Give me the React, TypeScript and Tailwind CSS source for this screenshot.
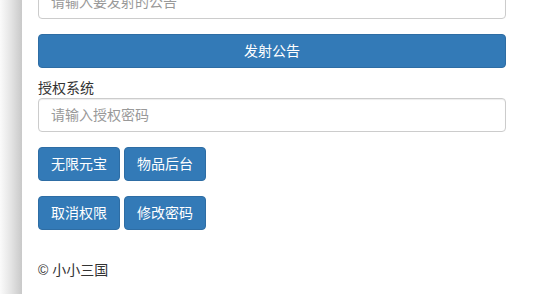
import React from 'react';

const btn =
  'inline-flex h-[34px] items-center justify-center rounded-[4px] border border-[#2e6da4] bg-[#337ab7] px-3 text-[14px] text-white';

const input =
  'block h-[34px] w-full rounded-[4px] border border-[#ccc] bg-white px-3 text-[14px] text-[#555] shadow-[inset_0_1px_1px_rgba(0,0,0,0.075)] outline-none placeholder:text-[#999]';

export default function App() {
  return (
    <div
      className="flex h-[294px] w-[539px] overflow-hidden bg-white text-[14px] leading-[20px] text-[#333]"
      style={{ fontFamily: '"Liberation Sans", "Noto Sans CJK SC", sans-serif' }}
    >
      {/* left shadow strip */}
      <div className="w-[22px] shrink-0 bg-gradient-to-r from-[#fbfbfb] via-[#e4e4e4] to-[#c9c9c9]" />

      <div className="flex w-[500px] shrink-0 flex-col bg-white px-4">
        {/* announcement */}
        <input className={`${input} -mt-[15px]`} placeholder="请输入要发射的公告" />
        <button className={`${btn} mt-[15px] w-full`}>发射公告</button>

        {/* auth */}
        <label className="mt-[10px] block h-[20px]">授权系统</label>
        <input className={input} placeholder="请输入授权密码" />

        <div className="mt-[15px] flex gap-1">
          <button className={btn}>无限元宝</button>
          <button className={btn}>物品后台</button>
        </div>
        <div className="mt-[15px] flex gap-1">
          <button className={btn}>取消权限</button>
          <button className={btn}>修改密码</button>
        </div>

        <footer className="mt-[30px]">© 小小三国</footer>
      </div>
    </div>
  );
}
